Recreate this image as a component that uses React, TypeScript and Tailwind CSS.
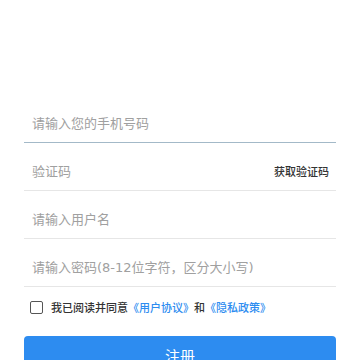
import React from "react";

const font = { fontFamily: '"Noto Sans CJK SC", "Noto Sans", sans-serif' };
const latin = { fontFamily: '"DejaVu Sans", "Noto Sans CJK SC", sans-serif' };

function Row({ children, focused }: { children: React.ReactNode; focused?: boolean }) {
  return (
    <div
      className={`h-[48px] flex items-center justify-between pt-[9px] pl-2 pr-[7px] border-b ${
        focused ? "border-[#a3b9c8]" : "border-[#e6e6e6]"
      }`}
    >
      {children}
    </div>
  );
}

export default function App() {
  return (
    <div className="w-[360px] h-[360px] bg-white overflow-hidden px-6 pt-[95px]" style={font}>
      <Row focused>
        <span className="text-[13px] text-[#a0a0a0]">请输入您的手机号码</span>
      </Row>
      <Row>
        <span className="text-[13px] text-[#a0a0a0]">验证码</span>
        <span className="text-[11px] text-[#333] font-medium">获取验证码</span>
      </Row>
      <Row>
        <span className="text-[13px] text-[#a0a0a0]">请输入用户名</span>
      </Row>
      <Row>
        <span className="text-[13px] text-[#a0a0a0]">
          请输入密码<span style={latin}>(8-12</span>位字符，区分大小写<span style={latin}>)</span>
        </span>
      </Row>
      <div className="flex items-center mt-[14px] pl-[6px] h-[13px]">
        <span className="w-[13px] h-[13px] border border-[#555] rounded-[2px] shrink-0" />
        <span className="ml-[8px] text-[11px] text-[#333] font-medium whitespace-nowrap">
          我已阅读并同意<span className="text-[#2d8cf0]">《用户协议》</span>和
          <span className="text-[#2d8cf0]">《隐私政策》</span>
        </span>
      </div>
      <button className="mt-[22px] w-full h-[40px] rounded-[4px] bg-[#2d8cf0] text-white text-[15px] flex items-center justify-center">
        注册
      </button>
    </div>
  );
}
